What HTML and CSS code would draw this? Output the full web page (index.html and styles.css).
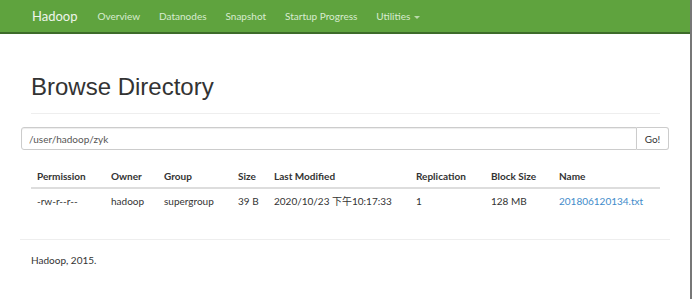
FILE: index.html
```html
<!DOCTYPE html>
<html>
<head>
<title>Browsing HDFS</title>
<link rel="stylesheet" href="styles.css">
</head>
<body>

<nav class="navbar">
  <span class="brand">Hadoop</span>
  <a class="nav-link" href="#">Overview</a>
  <a class="nav-link" href="#">Datanodes</a>
  <a class="nav-link" href="#">Snapshot</a>
  <a class="nav-link" href="#">Startup Progress</a>
  <a class="nav-link" href="#">Utilities <span class="caret"></span></a>
</nav>

<div class="container">
  <div class="page-header">
    <h1>Browse Directory</h1>
  </div>

  <div class="input-group">
    <input type="text" class="path-input" value="/user/hadoop/zyk">
    <button type="button" class="go-btn">Go!</button>
  </div>

  <div class="table-wrap">
    <table class="listing">
      <thead>
        <tr>
          <th class="c-perm">Permission</th>
          <th class="c-owner">Owner</th>
          <th class="c-group">Group</th>
          <th class="c-size">Size</th>
          <th class="c-mod">Last Modified</th>
          <th class="c-rep">Replication</th>
          <th class="c-block">Block Size</th>
          <th>Name</th>
        </tr>
      </thead>
      <tbody>
        <tr>
          <td>-rw-r--r--</td>
          <td>hadoop</td>
          <td>supergroup</td>
          <td>39 B</td>
          <td>2020/10/23 下午10:17:33</td>
          <td>1</td>
          <td>128 MB</td>
          <td><a href="#">201806120134.txt</a></td>
        </tr>
      </tbody>
    </table>
  </div>

  <hr class="footer-rule">
  <footer class="footer">Hadoop, 2015.</footer>
</div>

</body>
</html>
```

FILE: styles.css
```css
body {
  margin: 0;
  font-family: Lato, "Noto Sans CJK SC", sans-serif;
  font-size: 10px;
  color: #333;
  background-color: white;
  border-right: 2px solid #777;
  min-height: 299px;
  box-sizing: border-box;
}

.navbar {
  display: flex;
  align-items: center;
  height: 32px;
  background-color: #5fa33e;
  border-bottom: 2px solid #3d6b2a;
  padding-left: 32px;
}

.brand {
  font-size: 13px;
  color: #eef5ea;
  margin-right: 20px;
}

.nav-link {
  color: #d8ecd0;
  text-decoration: none;
  margin-right: 19px;
}

.caret {
  display: inline-block;
  width: 0;
  height: 0;
  margin-left: 1px;
  vertical-align: middle;
  border-top: 3px solid #b9d9aa;
  border-left: 3px solid transparent;
  border-right: 3px solid transparent;
}

.container {
  margin: 0 20px;
}

.page-header {
  margin: 39px 10px 13px 11px;
  padding-bottom: 12px;
  border-bottom: 1px solid #eee;
}

.page-header h1 {
  margin: 0;
  font-family: "Liberation Sans", Arial, sans-serif;
  font-weight: normal;
  font-size: 24px;
  line-height: 28px;
  color: #333;
}

.input-group {
  display: flex;
  height: 23px;
  margin: 0 1px;
}

.path-input {
  flex: 1;
  border: 1px solid #ccc;
  border-radius: 3px 0 0 3px;
  padding: 0 7px;
  font-family: Lato, sans-serif;
  font-size: 10px;
  color: #555;
  box-shadow: inset 0 1px 1px rgba(0, 0, 0, 0.075);
}

.go-btn {
  width: 32px;
  border: 1px solid #ccc;
  border-left: none;
  border-radius: 0 3px 3px 0;
  background-color: white;
  font-family: Lato, sans-serif;
  font-size: 10px;
  color: #333;
  padding: 0;
}

.table-wrap {
  margin: 14px 10px 0 11px;
}

.listing {
  width: 100%;
  border-collapse: collapse;
  line-height: 12px;
}

.listing th {
  text-align: left;
  font-weight: bold;
  padding: 6px 6px 5px;
  border-bottom: 2px solid #ddd;
}

.listing td {
  padding: 6px 6px;
}

.listing a {
  color: #428bca;
  text-decoration: none;
}

.c-perm { width: 62px; }
.c-owner { width: 41px; }
.c-group { width: 62px; }
.c-size { width: 24px; }
.c-mod { width: 130px; }
.c-rep { width: 63px; }
.c-block { width: 56px; }

.footer-rule {
  margin: 26px 0 0;
  border: none;
  border-top: 1px solid #eee;
}

.footer {
  padding: 14px 11px;
  line-height: 12px;
}
```
